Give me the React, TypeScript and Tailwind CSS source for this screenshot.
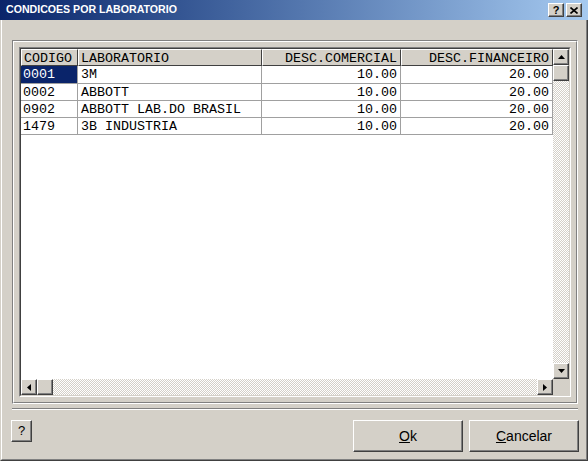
import type { ReactNode } from 'react'

const raised =
  'border-t border-l border-b border-r border-t-white border-l-white border-b-[#404040] border-r-[#404040] shadow-[inset_-1px_-1px_0_#808080] bg-[#d4d0c8]'

const checker =
  'bg-[image:repeating-conic-gradient(#d4d0c8_0_25%,#ffffff_0_50%)] bg-[length:2px_2px]'

const columns = [
  { title: 'CODIGO', width: 'w-[57px]', align: 'left' },
  { title: 'LABORATORIO', width: 'w-[184px]', align: 'left' },
  { title: 'DESC.COMERCIAL', width: 'w-[139px]', align: 'right' },
  { title: 'DESC.FINANCEIRO', width: 'w-[152px]', align: 'right' },
]

const rows = [
  ['0001', '3M', '10.00', '20.00'],
  ['0002', 'ABBOTT', '10.00', '20.00'],
  ['0902', 'ABBOTT LAB.DO BRASIL', '10.00', '20.00'],
  ['1479', '3B INDUSTRIA', '10.00', '20.00'],
]

function Arrow({ dir }: { dir: 'up' | 'down' | 'left' | 'right' }) {
  const pts = {
    up: '3.5,0 7,4 0,4',
    down: '0,0 7,0 3.5,4',
    left: '4,0 4,7 0,3.5',
    right: '0,0 4,3.5 0,7',
  }[dir]
  const vertical = dir === 'up' || dir === 'down'
  return (
    <svg width={vertical ? 7 : 4} height={vertical ? 4 : 7} viewBox={vertical ? '0 0 7 4' : '0 0 4 7'}>
      <polygon points={pts} fill="#000" />
    </svg>
  )
}

function ScrollButton({ children }: { children?: ReactNode }) {
  return (
    <div className={`flex h-[16px] w-[16px] shrink-0 items-center justify-center ${raised}`}>
      {children}
    </div>
  )
}

function TitleBar() {
  return (
    <div className="flex h-[20px] shrink-0 items-center bg-linear-to-r from-[#0a246a] to-[#a6caf0] pl-[6px] pr-[6px]">
      <span className="flex-1 text-[10.6px] font-bold text-white">CONDICOES POR LABORATORIO</span>
      <div className="flex gap-[2px]">
        <div className={`flex h-[14px] w-[16px] items-center justify-center ${raised}`}>
          <span className="text-[11px] leading-none font-bold text-black">?</span>
        </div>
        <div className={`flex h-[14px] w-[16px] items-center justify-center ${raised}`}>
          <svg width="8" height="7" viewBox="0 0 8 7">
            <path d="M0.5 0.5 L7.5 6.5 M7.5 0.5 L0.5 6.5" stroke="#000" strokeWidth="1.6" />
          </svg>
        </div>
      </div>
    </div>
  )
}

function Grid() {
  return (
    <div className="border-t border-l border-b border-r border-t-[#808080] border-l-[#808080] border-b-white border-r-white">
      <div className="border-t border-l border-b border-r border-t-[#404040] border-l-[#404040] border-b-[#d4d0c8] border-r-[#d4d0c8]">
        <div className="flex h-[346px] w-[548px] flex-col bg-white font-['Liberation_Mono','Courier_New',monospace] text-[13.33px] text-black">
          <div className="flex h-[330px]">
            <div className="flex w-[532px] flex-col">
              <div className="flex h-[17px]">
                {columns.map((c) => (
                  <div
                    key={c.title}
                    className={`flex h-[17px] items-center pt-[2px] ${c.width} ${
                      c.align === 'right' ? 'justify-end pr-[3px]' : 'pl-[2px]'
                    } border-t border-l border-b border-r border-t-white border-l-white border-b-[#404040] border-r-[#404040] bg-[#d4d0c8]`}
                  >
                    {c.title}
                  </div>
                ))}
              </div>
              {rows.map((r, ri) => (
                <div key={r[0]} className={`flex border-b border-b-[#a0a0a0] ${ri === 0 ? 'h-[18px]' : 'h-[17px]'}`}>
                  {r.map((v, ci) => (
                    <div
                      key={ci}
                      className={`flex items-center border-r border-r-[#a0a0a0] pt-[1px] ${columns[ci].width} ${
                        columns[ci].align === 'right' ? 'justify-end pr-[3px]' : 'pl-[2px]'
                      } ${ri === 0 && ci === 0 ? 'bg-[#0a246a] text-white' : ''}`}
                    >
                      {ci === 1 ? <span className="pl-[1px]">{v}</span> : v}
                    </div>
                  ))}
                </div>
              ))}
            </div>
            <div className="flex w-[16px] flex-col">
              <ScrollButton>
                <Arrow dir="up" />
              </ScrollButton>
              <ScrollButton />
              <div className={`flex-1 ${checker}`} />
              <ScrollButton>
                <Arrow dir="down" />
              </ScrollButton>
            </div>
          </div>
          <div className="flex h-[16px]">
            <div className="flex w-[532px]">
              <ScrollButton>
                <Arrow dir="left" />
              </ScrollButton>
              <ScrollButton />
              <div className={`flex-1 ${checker}`} />
              <ScrollButton>
                <Arrow dir="right" />
              </ScrollButton>
            </div>
            <div className="w-[16px] bg-[#d4d0c8]" />
          </div>
        </div>
      </div>
    </div>
  )
}

export default function App() {
  return (
    <div className="flex h-[461px] w-[588px] flex-col bg-[#d4d0c8] font-['Liberation_Sans',Arial,sans-serif] text-black">
      <TitleBar />
      <div className="flex flex-1 flex-col border-l border-r border-b border-l-[#d4d0c8] border-r-[#404040] border-b-[#404040]">
        <div className="flex flex-1 flex-col border-l border-r border-b border-l-white border-r-[#808080] border-b-[#808080]">
          <div className="mt-[20px] ml-[10px] h-[364px] w-[566px] border-t border-l border-b border-r border-t-[#808080] border-l-[#808080] border-b-white border-r-white">
            <div className="h-full w-full border-t border-l border-b border-r border-t-white border-l-white border-b-[#808080] border-r-[#808080] p-[5px]">
              <Grid />
            </div>
          </div>
          <div className="mt-[4px] ml-[10px] w-[566px] border-t border-b border-t-[#808080] border-b-white" />
          <div className="mt-[10px] flex items-start pr-[7px] pl-[9px]">
            <button className={`flex h-[22px] w-[21px] items-center justify-center text-[13px] ${raised}`}>?</button>
            <div className="flex-1" />
            <div className="flex gap-[6px]">
              <button className={`flex h-[32px] w-[110px] items-center justify-center text-[14px] ${raised}`}>
                <span>
                  <span className="underline">O</span>k
                </span>
              </button>
              <button className={`flex h-[32px] w-[110px] items-center justify-center text-[14px] ${raised}`}>
                <span>
                  <span className="underline">C</span>ancelar
                </span>
              </button>
            </div>
          </div>
        </div>
      </div>
    </div>
  )
}
